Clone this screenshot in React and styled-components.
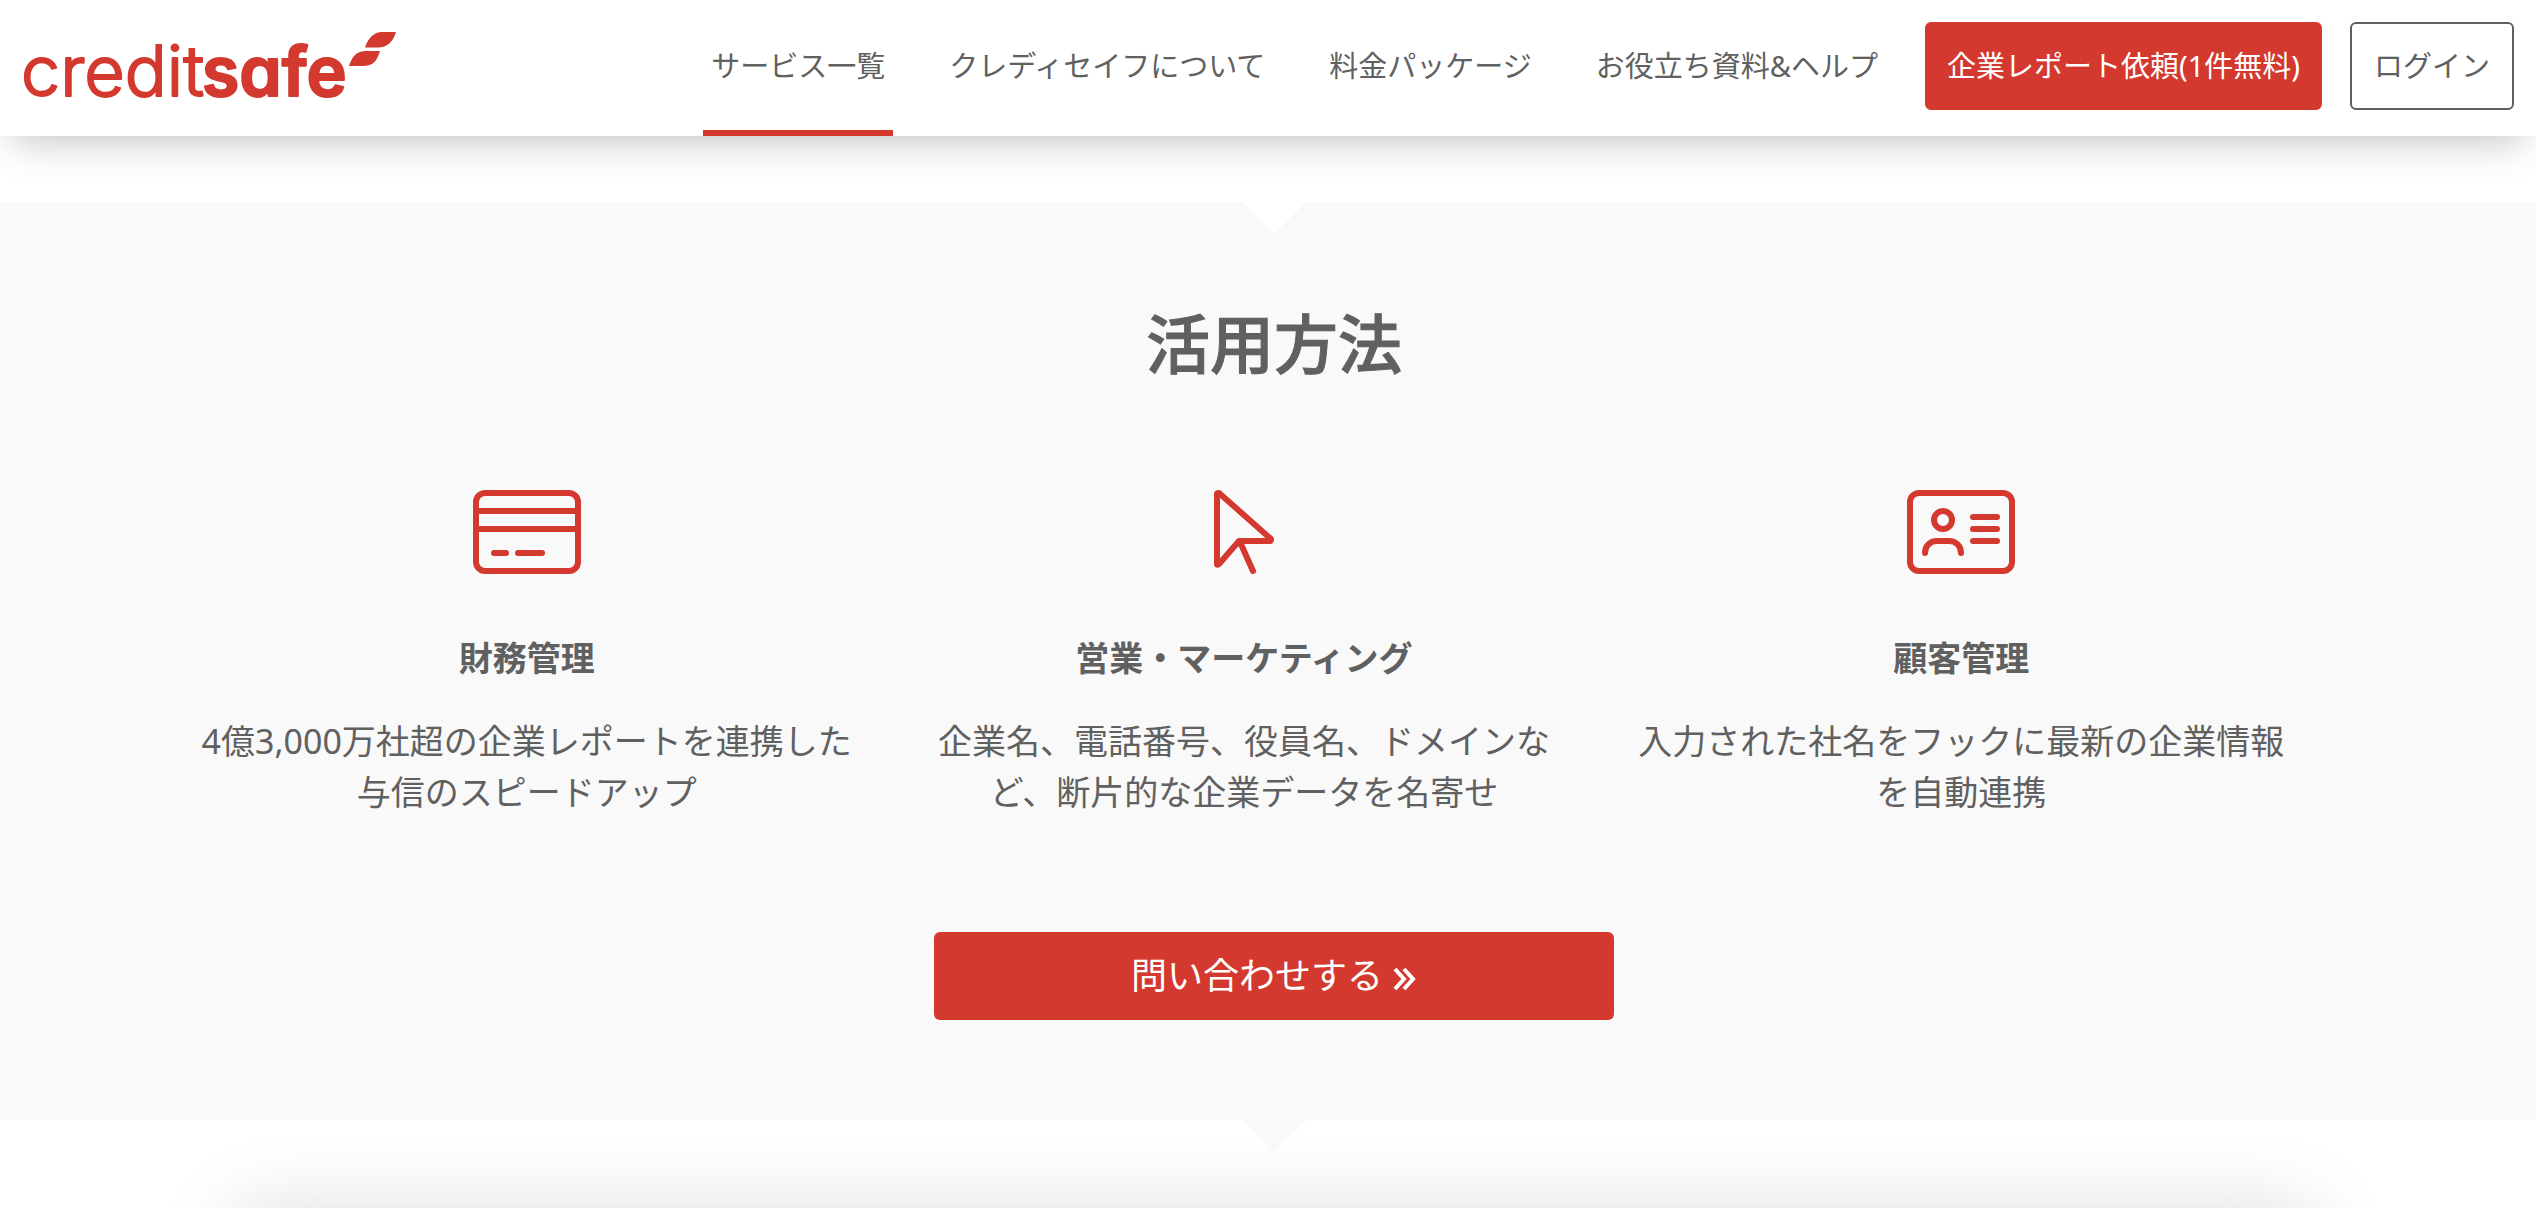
import React from "react";
import styled, { createGlobalStyle, ThemeProvider } from "styled-components";

const theme = {
    red: "#d3392e",
    text: "#606060",
    grey: "#f9f9f9",
    white: "#ffffff",
};

const GlobalStyle = createGlobalStyle`
    * {
        box-sizing: border-box;
        margin: 0;
        padding: 0;
    }

    body {
        background-color: ${theme.white};
        color: ${theme.text};
        font-family: "Noto Sans", "Noto Sans CJK JP", sans-serif;
    }
`;

const Page = styled.div`
    height: 100vh;
    overflow: hidden;
`;

const Header = styled.header`
    display: flex;
    align-items: center;
    justify-content: space-between;
    height: 136px;
    padding: 0 22px 0 16px;
    background-color: ${({ theme }) => theme.white};
    box-shadow: 0 16px 40px -12px rgba(0, 0, 0, 0.25);
`;

const LogoLink = styled.a`
    display: flex;

    svg {
        fill: ${({ theme }) => theme.red};
    }

    text {
        font-family: Inter, sans-serif;
        font-feature-settings: "cv11";
        stroke: ${({ theme }) => theme.red};
        stroke-linejoin: round;
    }
`;

const Nav = styled.nav`
    display: flex;
    align-items: center;
    height: 100%;
    gap: 28px;
`;

const NavList = styled.ul`
    display: flex;
    height: 100%;
    gap: 48px;
    margin-right: 11px;
    list-style: none;
`;

const NavLink = styled.a`
    display: flex;
    align-items: center;
    height: 100%;
    padding: 0 8px;
    border-top: 2px solid transparent;
    border-bottom: 6px solid ${({ theme, $active }) => ($active ? theme.red : "transparent")};
    color: ${({ theme }) => theme.text};
    font-size: 29px;
    line-height: 40px;
    text-decoration: none;
    white-space: nowrap;
`;

const HeaderButton = styled.button`
    height: 88px;
    min-width: 164px;
    margin-bottom: 4px;
    padding: 0 20px;
    border: 2px solid ${({ theme, $outline }) => ($outline ? theme.text : theme.red)};
    border-radius: 6px;
    background-color: ${({ theme, $outline }) => ($outline ? theme.white : theme.red)};
    color: ${({ theme, $outline }) => ($outline ? theme.text : theme.white)};
    font-family: inherit;
    font-size: 29px;
    line-height: 40px;
    white-space: nowrap;
`;

const Section = styled.section`
    position: relative;
    z-index: 1;
    display: flex;
    flex-direction: column;
    align-items: center;
    margin-top: 66px;
    padding: 98px 0 100px 12px;
    background-color: ${({ theme }) => theme.grey};

    &::before,
    &::after {
        content: "";
        position: absolute;
        left: calc(50% + 6px);
        border: 32px solid transparent;
        border-bottom-width: 0;
        transform: translateX(-50%);
    }

    &::before {
        top: 0;
        border-top-color: ${({ theme }) => theme.white};
    }

    &::after {
        top: 100%;
        border-top-color: ${({ theme }) => theme.grey};
    }
`;

const Title = styled.h2`
    font-size: 64px;
    font-weight: 500;
    line-height: 88px;
    -webkit-text-stroke: 1px currentColor;
`;

const Columns = styled.div`
    display: grid;
    grid-template-columns: repeat(3, 1fr);
    gap: 60px;
    width: 100%;
    max-width: 2212px;
    margin-top: 102px;
    padding: 0 90px 0 30px;
`;

const Column = styled.article`
    text-align: center;
`;

const Icon = styled.svg`
    display: block;
    height: 84px;
    margin: 0 auto;
    fill: none;
    stroke: ${({ theme }) => theme.red};
    stroke-width: 6;
    stroke-linecap: round;
    stroke-linejoin: round;
`;

const ColumnTitle = styled.h3`
    margin-top: 59px;
    font-size: 34px;
    font-weight: 700;
    line-height: 51px;
`;

const ColumnText = styled.p`
    margin-top: 32px;
    font-size: 34px;
    line-height: 51px;
`;

const ContactLink = styled.a`
    display: flex;
    align-items: center;
    justify-content: center;
    gap: 10px;
    width: 680px;
    height: 88px;
    margin-top: 114px;
    border-radius: 6px;
    background-color: ${({ theme }) => theme.red};
    color: ${({ theme }) => theme.white};
    font-size: 36px;
    line-height: 54px;
    text-decoration: none;

    svg {
        margin-top: 6px;
        fill: none;
        stroke: currentColor;
        stroke-width: 4;
    }
`;

const NextCard = styled.div`
    height: 400px;
    margin: 92px 224px 0 236px;
    background-color: ${({ theme }) => theme.white};
    box-shadow: 0 0 76px rgba(0, 0, 0, 0.15);
`;

const Logo = () => (
    <svg width="392" height="100" viewBox="16 17 392 100" role="img" aria-label="creditsafe">
        <text x="21" y="95" fontSize="70" fontWeight="300" strokeWidth="2">
            credit
        </text>
        <text x="202" y="95" fontSize="68" fontWeight="600" strokeWidth="2">
            safe
        </text>
        <path d="M365 46.5C368 37 374 31 382 31H396C393 41 387 46.5 378 46.5Z" />
        <path d="M349 65C352 55 357 50 366 50H380C377 60 373 65 363 65Z" />
    </svg>
);

const CardIcon = () => (
    <Icon width="108" viewBox="0 0 108 84">
        <rect x="3" y="3" width="102" height="78" rx="9" />
        <path d="M3 21H105M3 39H105M21 63H33M45 63H69" />
    </Icon>
);

const CursorIcon = () => (
    <Icon width="60" viewBox="0 0 60 84">
        <path d="M3 4V74C3 75 4 75 5 74L25 51H56C57 51 57 50 57 49L5 3C4 3 3 3 3 4ZM26 52L39 81" />
    </Icon>
);

const ContactIcon = () => (
    <Icon width="108" viewBox="0 0 108 84">
        <rect x="3" y="3" width="102" height="78" rx="9" />
        <circle cx="36" cy="30" r="9" />
        <path d="M18 63C18 56 23 51 30 51H42C49 51 54 56 54 63M66 27H90M66 39H90M66 51H90" />
    </Icon>
);

const navItems = [
    "サービス一覧",
    "クレディセイフについて",
    "料金パッケージ",
    "お役立ち資料&ヘルプ",
];

const columns = [
    {
        icon: <CardIcon />,
        title: "財務管理",
        text: "4億3,000万社超の企業レポートを連携した与信のスピードアップ",
    },
    {
        icon: <CursorIcon />,
        title: "営業・マーケティング",
        text: "企業名、電話番号、役員名、ドメインなど、断片的な企業データを名寄せ",
    },
    {
        icon: <ContactIcon />,
        title: "顧客管理",
        text: "入力された社名をフックに最新の企業情報を自動連携",
    },
];

const App = () => {
    return (
        <ThemeProvider theme={theme}>
            <GlobalStyle />
            <Page lang="ja">
                <Header>
                    <LogoLink href="#">
                        <Logo />
                    </LogoLink>
                    <Nav>
                        <NavList>
                            {navItems.map((item, index) => (
                                <li key={item}>
                                    <NavLink href="#" $active={index === 0}>
                                        {item}
                                    </NavLink>
                                </li>
                            ))}
                        </NavList>
                        <HeaderButton>企業レポート依頼(1件無料)</HeaderButton>
                        <HeaderButton $outline>ログイン</HeaderButton>
                    </Nav>
                </Header>
                <Section>
                    <Title>活用方法</Title>
                    <Columns>
                        {columns.map(({ icon, title, text }) => (
                            <Column key={title}>
                                {icon}
                                <ColumnTitle>{title}</ColumnTitle>
                                <ColumnText>{text}</ColumnText>
                            </Column>
                        ))}
                    </Columns>
                    <ContactLink href="#">
                        問い合わせする
                        <svg width="24" height="24" viewBox="0 0 24 24">
                            <path d="M2 2L11 12L2 22M11 2L20 12L11 22" />
                        </svg>
                    </ContactLink>
                </Section>
                <NextCard />
            </Page>
        </ThemeProvider>
    );
};

export default App;
